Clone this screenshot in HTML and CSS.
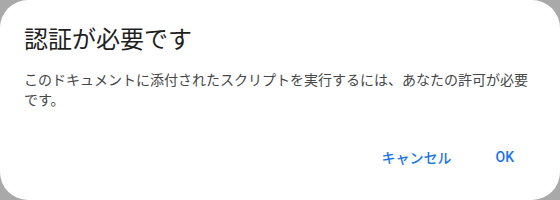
FILE: index.html
```html
<!DOCTYPE html>
<html lang="ja">
<head>
  <meta charset="UTF-8">
  <title>認証が必要です</title>
  <link rel="stylesheet" href="styles.css">
</head>
<body>
  <div class="dialog">
    <h1 class="dialog-title">認証が必要です</h1>
    <p class="dialog-text">このドキュメントに添付されたスクリプトを実行するには、あなたの許可が必要です。</p>
    <div class="dialog-actions">
      <button class="btn">キャンセル</button>
      <button class="btn">OK</button>
    </div>
  </div>
</body>
</html>
```

FILE: styles.css
```css
body {
  margin: 0;
  padding: 0;
  background-color: #a9a9a9;
  font-family: Roboto, "Noto Sans CJK JP", sans-serif;
}

.dialog {
  width: 560px;
  height: 200px;
  box-sizing: border-box;
  background-color: white;
  border-radius: 28px;
  padding: 24px 24px 0 24px;
}

.dialog-title {
  margin: 0 0 14px 0;
  font-size: 24px;
  font-weight: 400;
  line-height: 32px;
  color: #1f1f1f;
}

.dialog-text {
  margin: 0;
  font-size: 14px;
  line-height: 20px;
  color: #444746;
}

.dialog-actions {
  display: flex;
  justify-content: flex-end;
  gap: 20px;
  margin-top: 27px;
  padding-right: 10px;
}

.btn {
  background: none;
  border: none;
  height: 40px;
  padding: 0 12px;
  font-family: Roboto, "Noto Sans CJK JP", sans-serif;
  font-size: 14px;
  font-weight: 500;
  color: #1a73e8;
  cursor: pointer;
}
```
